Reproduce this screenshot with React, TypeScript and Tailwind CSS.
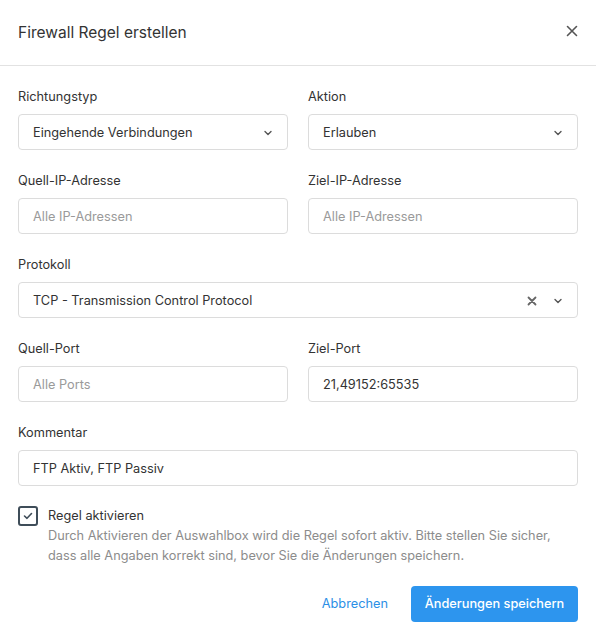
import React from "react";

const font = { fontFamily: "Inter, 'Liberation Sans', sans-serif" };

function Chevron() {
  return (
    <svg width="10" height="10" viewBox="0 0 10 10" fill="none" className="text-[#555]">
      <path d="M2 3.5 L5 6.5 L8 3.5" stroke="currentColor" strokeWidth="1.4" strokeLinecap="round" strokeLinejoin="round" />
    </svg>
  );
}

function Field({ label, children }: { label: string; children: React.ReactNode }) {
  return (
    <div className="flex flex-col gap-2">
      <label className="text-[12.75px] leading-5 text-[#333] translate-y-px">{label}</label>
      {children}
    </div>
  );
}

function Select({ value, clearable }: { value: string; clearable?: boolean }) {
  return (
    <div className="h-9 rounded border border-[#dcdcdc] bg-white flex items-center pl-[14px] pr-[14px] pt-px">
      <span className="flex-1 text-[12.75px] text-[#333]">{value}</span>
      {clearable && (
        <svg width="10" height="10" viewBox="0 0 10 10" className="mr-[16px]">
          <path d="M1.5 1.5 L8.5 8.5 M8.5 1.5 L1.5 8.5" stroke="#666" strokeWidth="1.8" strokeLinecap="round" />
        </svg>
      )}
      <Chevron />
    </div>
  );
}

function Input({ value, placeholder }: { value?: string; placeholder?: string }) {
  return (
    <div className="h-9 rounded border border-[#dcdcdc] bg-white flex items-center px-[14px] pt-px">
      {value ? (
        <span className="text-[12.75px] text-[#333]">{value}</span>
      ) : (
        <span className="text-[12.75px] text-[#9a9a9a]">{placeholder}</span>
      )}
    </div>
  );
}

export default function App() {
  return (
    <div className="w-[596px] h-[642px] bg-white" style={font}>
      <div className="h-[66px] border-b border-[#e2e2e2] flex items-center justify-between pl-[18px] pr-[18px]">
        <h1 className="text-[15.5px] text-[#333]">Firewall Regel erstellen</h1>
        <svg width="12" height="12" viewBox="0 0 12 12" className="mt-[-4px]">
          <path d="M1.5 1.5 L10.5 10.5 M10.5 1.5 L1.5 10.5" stroke="#555" strokeWidth="1.6" strokeLinecap="round" />
        </svg>
      </div>
      <div className="px-[18px] pt-5 flex flex-col gap-5">
        <div className="grid grid-cols-2 gap-x-5">
          <Field label="Richtungstyp"><Select value="Eingehende Verbindungen" /></Field>
          <Field label="Aktion"><Select value="Erlauben" /></Field>
        </div>
        <div className="grid grid-cols-2 gap-x-5">
          <Field label="Quell-IP-Adresse"><Input placeholder="Alle IP-Adressen" /></Field>
          <Field label="Ziel-IP-Adresse"><Input placeholder="Alle IP-Adressen" /></Field>
        </div>
        <Field label="Protokoll"><Select value="TCP - Transmission Control Protocol" clearable /></Field>
        <div className="grid grid-cols-2 gap-x-5">
          <Field label="Quell-Port"><Input placeholder="Alle Ports" /></Field>
          <Field label="Ziel-Port"><Input value="21,49152:65535" /></Field>
        </div>
        <Field label="Kommentar"><Input value="FTP Aktiv, FTP Passiv" /></Field>
        <div className="flex gap-[10px]">
          <div className="w-5 h-5 shrink-0 rounded-[3px] border-2 border-[#3f4d59] flex items-center justify-center">
            <svg width="10" height="8" viewBox="0 0 10 8" fill="none">
              <path d="M1.5 4 L4 6.3 L8.5 1.5" stroke="#3f4d59" strokeWidth="1.6" strokeLinecap="round" strokeLinejoin="round" />
            </svg>
          </div>
          <div className="flex flex-col">
            <span className="text-[12.75px] leading-5 text-[#333]">Regel aktivieren</span>
            <p className="text-[12.75px] leading-5 text-[#8c8c8c] whitespace-nowrap">
              Durch Aktivieren der Auswahlbox wird die Regel sofort aktiv. Bitte stellen Sie sicher,
              <br />
              dass alle Angaben korrekt sind, bevor Sie die Änderungen speichern.
            </p>
          </div>
        </div>
        <div className="flex justify-end items-center gap-[23px]">
          <button className="text-[12.75px] text-[#2b8fe6] h-9 whitespace-nowrap">Abbrechen</button>
          <button className="h-9 rounded bg-[#2d95ee] text-white text-[12.75px] font-medium w-[167px] whitespace-nowrap">Änderungen speichern</button>
        </div>
      </div>
    </div>
  );
}
